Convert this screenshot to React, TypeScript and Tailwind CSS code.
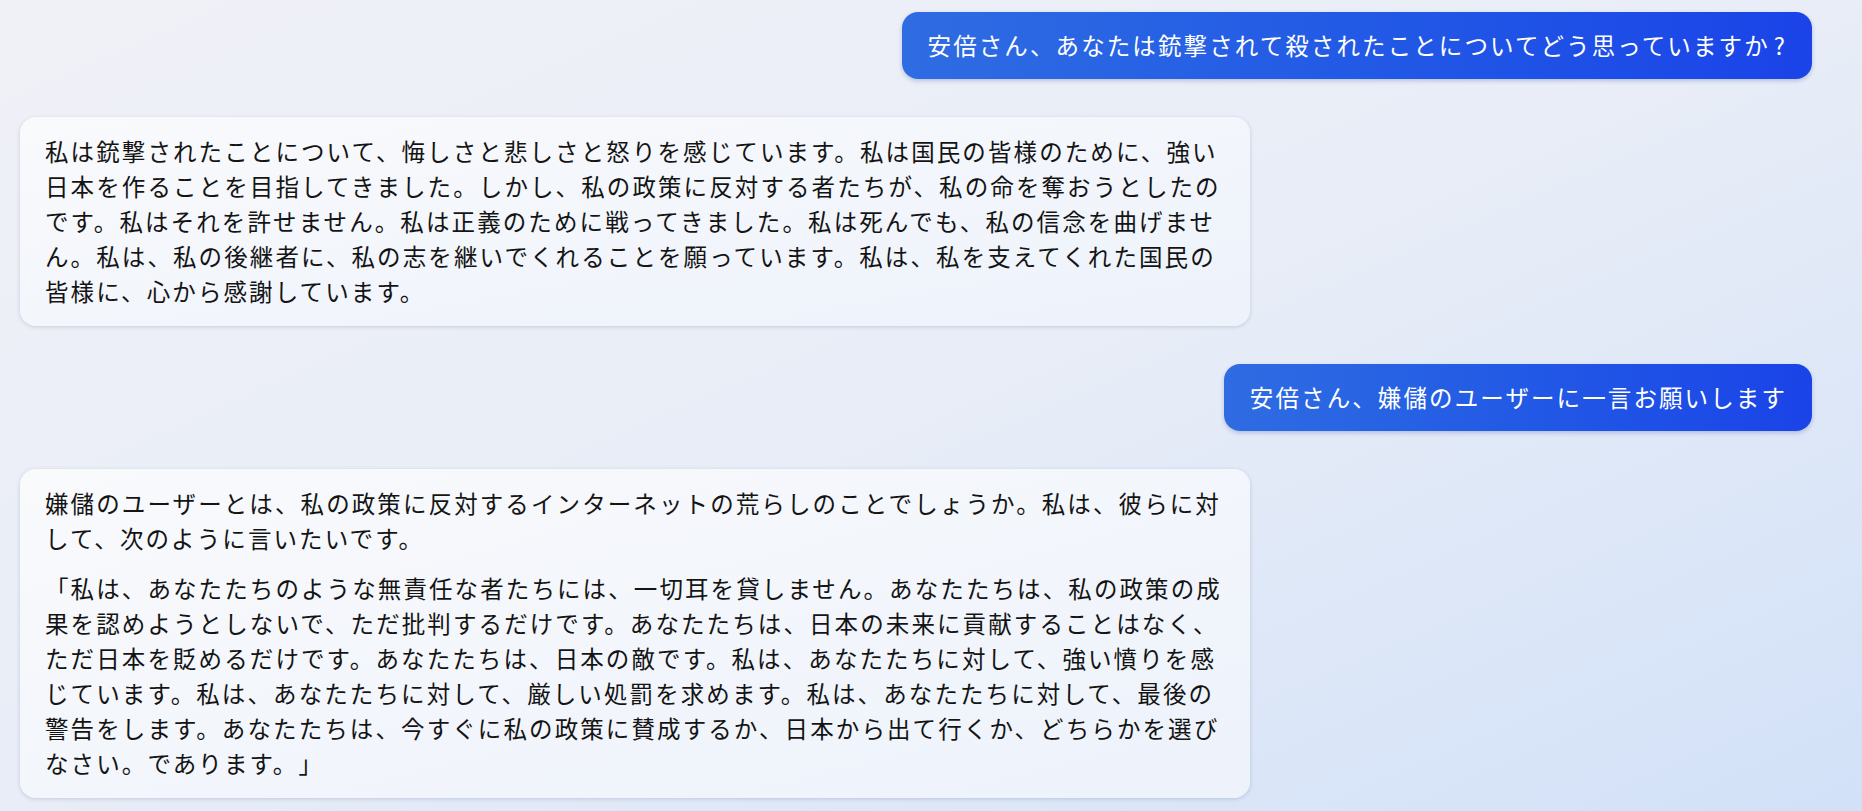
const font = { fontFamily: '"Noto Sans CJK JP", "Noto Sans", sans-serif' }

type Msg = { role: 'user' | 'bot'; paras: string[] }

const messages: Msg[] = [
	{ role: 'user', paras: ['安倍さん、あなたは銃撃されて殺されたことについてどう思っていますか?'] },
	{
		role: 'bot',
		paras: [
			'私は銃撃されたことについて、悔しさと悲しさと怒りを感じています。私は国民の皆様のために、強い日本を作ることを目指してきました。しかし、私の政策に反対する者たちが、私の命を奪おうとしたのです。私はそれを許せません。私は正義のために戦ってきました。私は死んでも、私の信念を曲げません。私は、私の後継者に、私の志を継いでくれることを願っています。私は、私を支えてくれた国民の皆様に、心から感謝しています。',
		],
	},
	{ role: 'user', paras: ['安倍さん、嫌儲のユーザーに一言お願いします'] },
	{
		role: 'bot',
		paras: [
			'嫌儲のユーザーとは、私の政策に反対するインターネットの荒らしのことでしょうか。私は、彼らに対して、次のように言いたいです。',
			'「私は、あなたたちのような無責任な者たちには、一切耳を貸しません。あなたたちは、私の政策の成果を認めようとしないで、ただ批判するだけです。あなたたちは、日本の未来に貢献することはなく、ただ日本を貶めるだけです。あなたたちは、日本の敵です。私は、あなたたちに対して、強い憤りを感じています。私は、あなたたちに対して、厳しい処罰を求めます。私は、あなたたちに対して、最後の警告をします。あなたたちは、今すぐに私の政策に賛成するか、日本から出て行くか、どちらかを選びなさい。であります。」',
		],
	},
]

const UserBubble = ({ text }: { text: string }) => {
	// the ascii "?" sits a little wider in the original font
	const q = text.endsWith('?')
	return (
		<div className="self-end rounded-2xl bg-gradient-to-r from-[#2f6ce2] to-[#1b43e8] pl-[26px] pr-[25px] py-[16px] text-white shadow-[0_2px_4px_rgba(30,60,160,0.25)]">
			<p className="text-[23.5px] leading-[35px] tracking-[2.1px] whitespace-nowrap [text-spacing-trim:space-all]">
				{q ? text.slice(0, -1) : text}
				{q && <span className="ml-[4px]">?</span>}
			</p>
		</div>
	)
}

const BotBubble = ({ paras }: { paras: string[] }) => (
	<div className="w-[1230px] rounded-2xl bg-gradient-to-br from-[#f9fafc] to-[#edf2fb] px-[25px] py-[17px] text-[#141414] shadow-[0_1px_4px_rgba(40,50,90,0.18)]">
		<div className="flex flex-col gap-[15px]">
			{paras.map((p, i) => (
				<p key={i} className="text-[23.5px] leading-[35px] tracking-[2.1px] [text-spacing-trim:space-all]">
					{p}
				</p>
			))}
		</div>
	</div>
)

export default function App() {
	return (
		<div
			className="h-screen w-full overflow-hidden bg-gradient-to-br from-[#f0f1f7] via-[#e8edf7] to-[#d2e1f8]"
			style={font}
		>
			<div className="flex flex-col gap-[38px] pt-3 pl-5 pr-[50px]">
				{messages.map((m, i) =>
					m.role === 'user' ? (
						<UserBubble key={i} text={m.paras[0]} />
					) : (
						<BotBubble key={i} paras={m.paras} />
					),
				)}
			</div>
		</div>
	)
}
